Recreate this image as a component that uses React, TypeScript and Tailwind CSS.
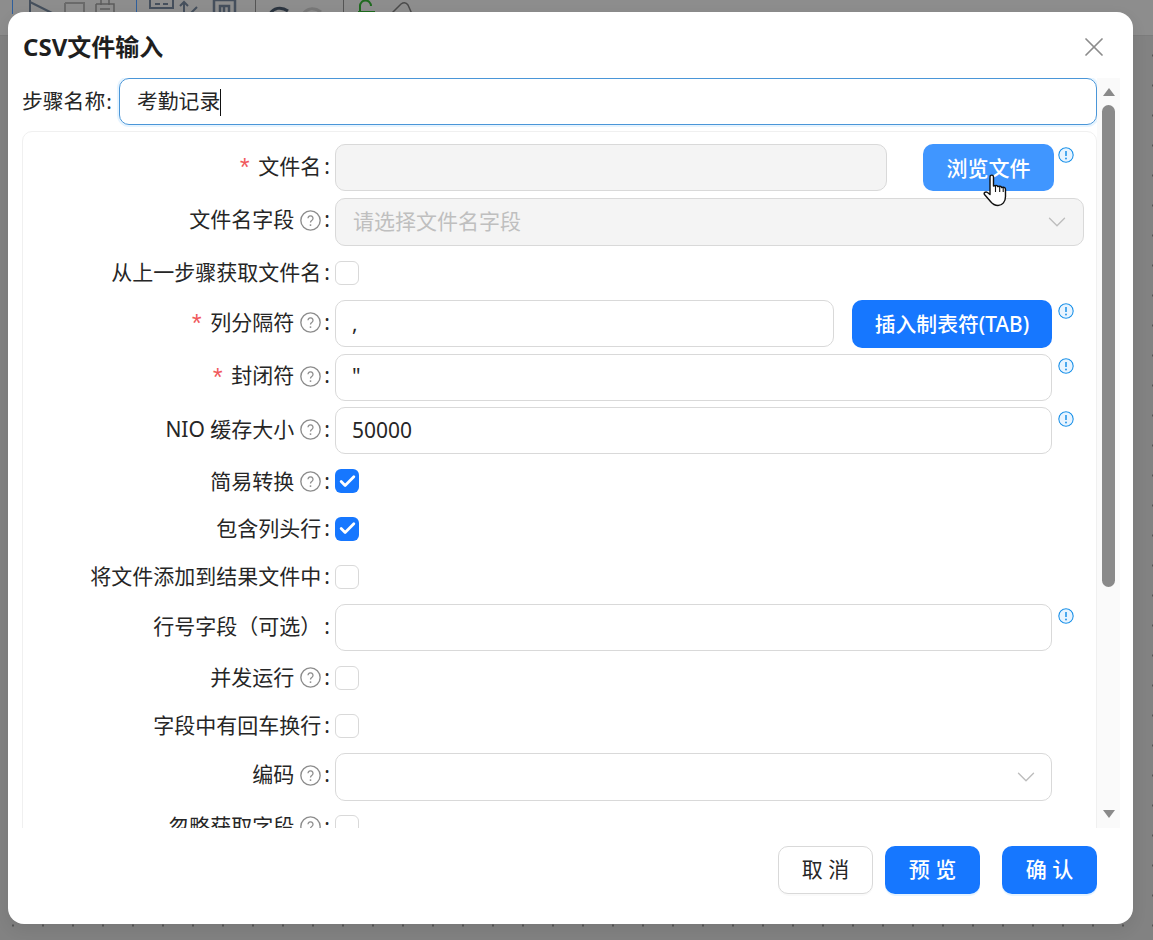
import { ChevronDown, Check, X } from 'lucide-react'

const FONT = 'font-["Noto_Sans","Noto_Sans_CJK_SC",sans-serif]'

function Help() {
  return (
    <svg viewBox="0 0 20 20" className="w-[21px] h-[21px] ml-[6px] shrink-0 text-[#8c8c8c]" fill="none" stroke="currentColor">
      <circle cx="10" cy="10" r="9.200" strokeWidth="1.300" />
      <path d="M7.600 7.900a2.400 2.400 0 1 1 3.600 2.100c-.8.500-1.200.9-1.200 1.800" strokeWidth="1.200" />
      <circle cx="10" cy="14.400" r=".9" fill="currentColor" stroke="none" />
    </svg>
  )
}

function Info() {
  return (
    <svg viewBox="0 0 16 16" className="w-[16px] h-[16px] shrink-0 text-[#1890e8] bg-[#e8f4ff] rounded-full" fill="none" stroke="currentColor">
      <circle cx="8" cy="8" r="7.200" strokeWidth="1.100" />
      <path d="M8 4v5" strokeWidth="1.500" />
      <circle cx="8" cy="11.500" r=".9" fill="currentColor" stroke="none" />
    </svg>
  )
}

function Label({ text, required, help, plain }: { text: string; required?: boolean; help?: boolean; plain?: boolean }) {
  return (
    <div className={`w-[312px] shrink-0 flex items-center justify-end h-[47px] pr-[5px] text-[21px] text-[#262626] whitespace-nowrap ${plain ? '' : 'pb-[2px]'}`}>
      {required && <span className="text-[#f0595c] mr-[6px] font-['Liberation_Mono'] text-[25px] leading-none translate-y-[4px]">*</span>}
      <span>{text}</span>
      {help && <Help />}
      <span className="ml-[3px]">:</span>
    </div>
  )
}

function TextBox({ value, className }: { value?: string; className?: string }) {
  return (
    <div className={`h-[47px] rounded-[10px] border border-[#d9d9d9] bg-white px-[16px] flex items-center text-[21px] text-[#262626] ${className ?? ''}`}>
      {value}
    </div>
  )
}

function InputRow({ text, required, help, value }: { text: string; required?: boolean; help?: boolean; value?: string }) {
  return (
    <div className="flex h-[47px]">
      <Label text={text} required={required} help={help} />
      <TextBox value={value} className="w-[717px]" />
      <div className="ml-[6px] mt-[4px]"><Info /></div>
    </div>
  )
}

function CheckRow({ text, help, checked }: { text: string; help?: boolean; checked?: boolean }) {
  return (
    <div className="flex h-[41px] items-center">
      <div className="h-[41px] flex items-center">
        <Label text={text} help={help} plain />
      </div>
      {checked ? (
        <div className="w-[24px] h-[24px] rounded-[6px] bg-[#1677ff] flex items-center justify-center">
          <Check className="w-[19px] h-[19px] text-white" strokeWidth={3.5} />
        </div>
      ) : (
        <div className="w-[24px] h-[24px] rounded-[6px] border border-[#d9d9d9] bg-white" />
      )}
    </div>
  )
}

function FooterButton({ text, primary }: { text: string; primary?: boolean }) {
  return (
    <button
      className={`w-[95px] h-[48px] rounded-[10px] text-[21px] whitespace-pre ${
        primary
          ? 'bg-[#1677ff] text-white font-medium shadow-[0_2px_0_rgba(5,145,255,0.1)]'
          : 'bg-white text-[#262626] border border-[#d9d9d9] shadow-[0_2px_0_rgba(0,0,0,0.02)]'
      }`}
    >
      {text}
    </button>
  )
}

function Toolbar() {
  return (
    <div className="h-[36px] bg-[#8d8d8d] border-b border-[#7c7c7c] overflow-hidden">
      <svg width="440" height="14" viewBox="0 0 440 14" fill="none" stroke="#454f5c" strokeWidth="2">
        <path d="M12.500 0v14M136.500 0v14" stroke="#2f5f9c" strokeWidth="1" />
        <path d="M255.500 0v14M343.500 0v14" stroke="#555" strokeWidth="1" />
        <path d="M30 0v14M30 2l22 11" />
        <path d="M65 3h19v11M65 3v11" stroke="#6a6a6a" />
        <path d="M96 4h18v10M96 4v10M101 0v5M109 0v5M100 9h10" stroke="#5c5c5c" strokeWidth="1.500" />
        <path d="M150 0v8h23V0M155 4h5M163 4h5" strokeWidth="2" />
        <path d="M184 14V2M180 6l4-4 4 4M190 14l7-7" />
        <path d="M214 0h21v14M214 0v14M220 14V6h9v8M224 7v7" strokeWidth="2.500" />
        <path d="M270 14c3-6 11-8 18-3" strokeWidth="3" stroke="#2c3540" />
        <path d="M303 14c4-6 11-7 18-2" stroke="#777" strokeWidth="3" />
        <path d="M360 14V6a5 5 0 0 1 11 0M358 12h17" stroke="#1f6a1f" />
        <path d="M391 14l10-10c3-2 5-2 7 1l4 9" stroke="#4a4a4a" strokeWidth="1.500" />
      </svg>
    </div>
  )
}

export default function App() {
  return (
    <div className={`relative w-[1153px] h-[940px] overflow-hidden bg-[#828282] bg-[radial-gradient(circle,#555_1px,transparent_1.3px)] bg-[length:30px_30px] bg-[position:-2px_10.500px] ${FONT}`}>
      <Toolbar />

      {/* dialog */}
      <div className="absolute left-[8px] top-[12px] w-[1125px] h-[912px] bg-white rounded-[16px] flex flex-col shadow-[0_6px_16px_rgba(0,0,0,0.08)]">
        <div className="h-[66px] shrink-0 flex items-start justify-between pl-[15px] pr-[23px] pt-[17px]">
          <div className="text-[24px] leading-[36px] font-bold text-[#1f1f1f]">CSV文件输入</div>
          <X className="w-[32px] h-[32px] mt-[2px] text-[#8c8c8c]" strokeWidth={1.3} />
        </div>

        <div className="flex h-[750px] shrink-0">
          <div className="w-[1089px] shrink-0 overflow-hidden pl-[14px]">
            <div className="flex items-center h-[47px]">
              <div className="w-[97px] shrink-0 text-[20.8px] text-[#262626] whitespace-nowrap">步骤名称<span className="ml-[1px]">:</span></div>
              <div className="w-[978px] h-[47px] rounded-[10px] border border-[#4a96d8] shadow-[0_0_0_2px_rgba(5,145,255,0.1)] px-[17px] pt-[1px] flex items-center text-[20.8px] text-[#262626]">
                考勤记录
                <span className="w-px h-[27px] bg-[#111]" />
              </div>
            </div>

            <div className="mt-[6px] w-[1075px] border border-[#f0f0f0] rounded-[10px] pt-[12px] flex flex-col gap-[6.650px]">
              <div className="flex h-[47px]">
                <Label text="文件名" required />
                <TextBox className="w-[552px] !bg-[#f4f4f4]" />
                <button className="ml-[36px] w-[131px] h-[47px] pt-[2px] rounded-[10px] bg-[#4096ff] text-white text-[21px] font-medium">浏览文件</button>
                <div className="ml-[4px] mt-[3px]"><Info /></div>
              </div>

              <div className="flex h-[48px]">
                <Label text="文件名字段" help />
                <div className="w-[749px] h-[48px] rounded-[10px] border border-[#d9d9d9] bg-[#f4f4f4] pl-[17px] pr-[11px] flex items-center justify-between text-[21px] text-[#bfbfbf]">
                  请选择文件名字段
                  <ChevronDown className="w-[30px] h-[30px] text-[#bdbdbd]" strokeWidth={1.1} />
                </div>
              </div>

              <CheckRow text="从上一步骤获取文件名" />

              <div className="flex h-[47px]">
                <Label text="列分隔符" required help />
                <TextBox value="," className="w-[499px]" />
                <button className="ml-[18px] w-[200px] h-[48px] pt-[1px] rounded-[10px] bg-[#1677ff] text-white text-[20.8px] font-medium whitespace-nowrap">插入制表符(TAB)</button>
                <div className="ml-[6px] mt-[3px]"><Info /></div>
              </div>

              <InputRow text="封闭符" required help value={'"'} />
              <InputRow text="NIO 缓存大小" help value="50000" />
              <CheckRow text="简易转换" help checked />
              <CheckRow text="包含列头行" checked />
              <CheckRow text="将文件添加到结果文件中" />
              <InputRow text="行号字段（可选）" />
              <CheckRow text="并发运行" help />
              <CheckRow text="字段中有回车换行" />

              <div className="flex h-[47px]">
                <Label text="编码" help />
                <div className="w-[717px] h-[48px] rounded-[10px] border border-[#d9d9d9] bg-white pr-[10px] flex items-center justify-end">
                  <ChevronDown className="w-[30px] h-[30px] text-[#bdbdbd]" strokeWidth={1.1} />
                </div>
              </div>

              <CheckRow text="忽略获取字段" help />
            </div>
          </div>

          {/* scrollbar */}
          <div className="w-[23px] shrink-0 bg-[#fafafa] flex flex-col items-center">
            <div className="mt-[10px] w-0 h-0 border-x-[6px] border-x-transparent border-b-[8px] border-b-[#8a8a8a]" />
            <div className="mt-[9px] w-[13px] h-[482px] rounded-full bg-[#8a8a8a]" />
            <div className="mt-auto mb-[10px] w-0 h-0 border-x-[6px] border-x-transparent border-t-[8px] border-t-[#8a8a8a]" />
          </div>
        </div>

        <div className="flex justify-end pt-[18px] pr-[36px]">
          <FooterButton text="取 消" />
          <div className="ml-[12px]"><FooterButton text="预 览" primary /></div>
          <div className="ml-[22px]"><FooterButton text="确 认" primary /></div>
        </div>
      </div>

      {/* mouse pointer */}
      <svg className="absolute left-[983px] top-[174px]" width="26" height="33" viewBox="0 0 26 33" fill="#fff" stroke="#111" strokeWidth="1.4" strokeLinejoin="round">
        <path d="M7 3c0-2.500 3.500-2.500 3.500 0v9l2-.5c1-.3 2 .2 2.200 1l2-.2c1-.1 1.800.5 2 1.200l1.500-.2c1.300-.1 2.300.8 2.300 2.200v7c0 5-3 9-7.500 9-4 0-5.500-1.500-7.500-4l-6-7c-1-1.500 1-3.500 3-2l2.500 2z" />
        <path d="M12.500 12v6M16.700 13v5M20.200 14v4" fill="none" strokeWidth="1.100" />
      </svg>
    </div>
  )
}
